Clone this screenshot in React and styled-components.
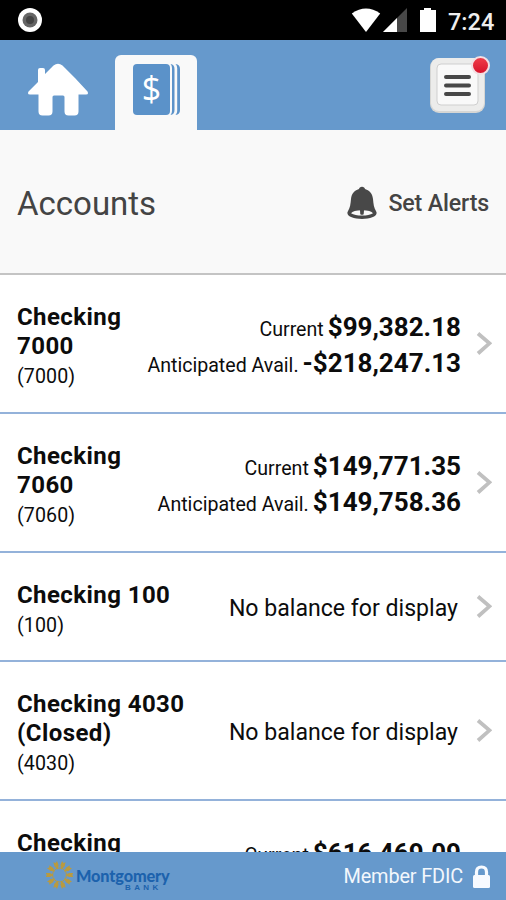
import React from "react";
import styled, { createGlobalStyle } from "styled-components";

const BLUE = "#6699cc";

const Global = createGlobalStyle`
  *, *::before, *::after { box-sizing: border-box; }
  html, body { margin: 0; background: #fff; }
  body { font-family: Roboto, "Liberation Sans", sans-serif; color: #0c0c0c; overflow: hidden; }
  svg { display: block; flex: none; }
`;

const Screen = styled.main`
  width: 506px;
  height: 900px;
  display: flex;
  flex-direction: column;
  overflow: hidden;
`;

const StatusBar = styled.div`
  flex: none;
  height: 40px;
  padding: 0 12px 0 17px;
  display: flex;
  justify-content: space-between;
  align-items: center;
  background: #000;
`;

const StatusIcons = styled.div`
  display: flex;
  align-items: center;
`;

const Clock = styled.span`
  width: 46px;
  margin-left: 11px;
  padding-top: 3px;
  color: #eee;
  font-size: 23.5px;
  font-weight: 500;
  line-height: 28px;
  white-space: nowrap;
`;

const NavBar = styled.nav`
  flex: none;
  height: 90px;
  padding: 15px 20px 0 28px;
  display: flex;
  background: ${BLUE};
`;

const HomeLink = styled.div`
  width: 87px;
  padding-top: 8px;
`;

const Tab = styled.div`
  width: 82px;
  height: 75px;
  padding: 9px 0 0 18px;
  border-radius: 6px 6px 0 0;
  background: #f9f9f9;
`;

const MenuButton = styled.div`
  position: relative;
  width: 56px;
  height: 56px;
  margin: 2px 0 0 auto;
`;

const AlertDot = styled.span`
  position: absolute;
  top: -1px;
  right: -4px;
  width: 19px;
  height: 19px;
  border: 2px solid #f3dfe3;
  border-radius: 50%;
  background: linear-gradient(#ef3b48, #d8142c);
`;

const TitleBar = styled.header`
  flex: none;
  height: 145px;
  padding: 5px 17px 0;
  display: flex;
  align-items: center;
  justify-content: space-between;
  background: #f9f9f9;
  border-bottom: 2px solid #c4c4c4;
  color: #444;
`;

const Heading = styled.h1`
  margin: 0;
  font-size: 33px;
  font-weight: 400;
  line-height: 40px;
`;

const AlertsLink = styled.div`
  display: flex;
  align-items: center;
  gap: 11px;
  padding-bottom: 2px;
  font-size: 23.2px;
  font-weight: 500;
  letter-spacing: -0.15px;
  line-height: 28px;
`;

const List = styled.section`
  flex: 1;
  min-height: 0;
  overflow: hidden;
`;

const Row = styled.article`
  height: ${(p) => p.$height}px;
  padding-left: 17px;
  padding-right: 14px;
  display: flex;
  border-bottom: 2px solid #94b2da;
`;

const Account = styled.div`
  width: ${(p) => p.$width}px;
  flex: none;
  padding-top: 28px;
`;

const AccountName = styled.div`
  font-size: 24px;
  font-weight: 700;
  line-height: 29px;
  letter-spacing: 0.42px;
  white-space: pre-line;
`;

const AccountNumber = styled.div`
  padding-top: 2px;
  font-size: 19.6px;
  line-height: 28px;
  letter-spacing: 0.1px;
`;

const Balances = styled.div`
  flex: 1;
  padding-top: 35px;
  display: flex;
  flex-direction: column;
  align-items: flex-end;
`;

const Balance = styled.div`
  display: flex;
  align-items: baseline;
  gap: 4px;
  height: 36px;
  line-height: 35px;
  white-space: nowrap;
`;

const Label = styled.span`
  font-size: 19.6px;
`;

const Amount = styled.span`
  font-size: 26px;
  font-weight: 700;
`;

const Notice = styled.div`
  flex: 1;
  align-self: center;
  padding: 4px 3px 0 0;
  font-size: 23.1px;
  line-height: 28px;
  text-align: right;
  white-space: nowrap;
`;

const ChevronCell = styled.div`
  width: 31px;
  flex: none;
  padding-bottom: 1px;
  display: flex;
  justify-content: flex-end;
  align-items: center;
`;

const Footer = styled.footer`
  flex: none;
  height: 48px;
  padding: 0 15px 0 46px;
  display: flex;
  justify-content: space-between;
  background: ${BLUE};
`;

const Brand = styled.div`
  display: flex;
  gap: 3px;
  padding-top: 8px;
  color: #1c62ad;
`;

const BrandText = styled.div`
  width: 100px;
  padding-top: 7px;
`;

const BrandName = styled.div`
  font-family: Lato, sans-serif;
  font-size: 16.3px;
  font-weight: 900;
  letter-spacing: -0.15px;
  line-height: 17px;
`;

const BrandSub = styled.div`
  padding-left: 49px;
  font-family: "Liberation Sans", sans-serif;
  font-size: 8px;
  font-weight: 700;
  line-height: 7px;
  letter-spacing: 3.4px;
`;

const Member = styled.div`
  display: flex;
  align-items: center;
  gap: 9px;
  padding-top: 2px;
  color: #f3f7fc;
  font-size: 19.9px;
  letter-spacing: -0.15px;
  line-height: 28px;
`;

const HomeIcon = () => (
  <svg width="60" height="54" viewBox="0 0 60 54" fill="#fff">
    <path d="M10 7q0-2 2-2h3q2 0 2 2v4l8.500-8.500q4.500-3.500 9 0L47 15l12.500 13.500q1.500 3-1.500 3h-7.500v17q0 4-4 4h-6q-4 0-4-4V34q0-1.500-1.500-1.500h-9q-1.500 0-1.500 1.500v14.500q0 4-4 4h-6q-4 0-4-4v-17H2q-3 0-1.500-3L10 19z" />
  </svg>
);

const LedgerIcon = () => (
  <svg width="48" height="52" viewBox="0 0 48 52">
    <rect x="0" y="0" width="37" height="51" rx="4" fill="#5b92c9" />
    <path d="M37.500 0q4 .5 4 5v41q0 4.500-4 5 1.500-1.500 1.500-4V4q0-2.500-1.500-4z" fill="#5b92c9" />
    <path d="M42.500 0q4.500 .5 4.500 5v41q0 4.500-4.500 5 1.700-1.500 1.700-4V4q0-2.500-1.700-4z" fill="#5b92c9" />
    <text x="18.500" y="37" textAnchor="middle" fontFamily="Open Sans, sans-serif" fontSize="34" fill="#fff">$</text>
  </svg>
);

const MenuIcon = () => (
  <svg width="56" height="56" viewBox="0 0 56 56">
    <rect x="0" y="1" width="55" height="55" rx="9" fill="#d6d6d4" />
    <rect x="1" y="1" width="53" height="53" rx="8" fill="#ececeb" />
    <rect x="7" y="7" width="41" height="41" rx="4" fill="#f9f9f9" stroke="#cfcfcf" />
    <g stroke="#484848" strokeWidth="4" strokeLinecap="round">
      <path d="M16 20h23M16 28.500h23M16 37h23" />
    </g>
  </svg>
);

const BellIcon = () => (
  <svg width="30" height="34" viewBox="0 0 30 34">
    <path d="M15 .8c1.800 0 2.600 1 3 2.200 5 1.500 7.500 5 8 10 .5 5 .8 8.500 3.200 12.500C31.500 30 24 33 15 33S-1.500 30 .8 25.500C3.200 21.500 3.500 18 4 13c.5-5 3-8.500 8-10 .4-1.200 1.200-2.200 3-2.200z" fill="#484848" />
    <path d="M4 27.200q2-3 11-3t11 3q-4 2.300-11 2.300T4 27.200z" fill="#f9f9f9" />
    <path d="M13 24h4l-.3 4.200q-1.700 1-3.400 0z" fill="#484848" />
  </svg>
);

const Chevron = () => (
  <svg width="16" height="23" viewBox="0 0 16 23" fill="none">
    <path d="M2 1.500l11.500 9.800L2 21.500" stroke="#c0c0c0" strokeWidth="3.800" />
  </svg>
);

const Sun = () => (
  <svg width="27" height="30" viewBox="-14 -15 28 30">
    {Array.from({ length: 10 }, (_, i) => (
      <path
        key={i}
        transform={`rotate(${i * 36 + 18}) scale(1 1.04)`}
        d="M0-5.800L-2.200-9.500L-2-14L0-12.600L2-14L2.200-9.500z"
        fill="#b99a40"
      />
    ))}
    <circle r="7.200" fill="none" stroke="#b99a40" strokeWidth="1" />
  </svg>
);

const LockIcon = () => (
  <svg width="19" height="24" viewBox="0 0 19 24">
    <path d="M4.500 12V7q0-5 5-5t5 5v5" fill="none" stroke="#f7faff" strokeWidth="3.200" />
    <rect x="1" y="10" width="17" height="13" rx="1.500" fill="#f7faff" />
  </svg>
);

const accounts = [
  { name: "Checking\n7000", number: "7000", height: 139, balances: [["Current", "$99,382.18"], ["Anticipated Avail.", "-$218,247.13"]] },
  { name: "Checking\n7060", number: "7060", height: 139, balances: [["Current", "$149,771.35"], ["Anticipated Avail.", "$149,758.36"]] },
  { name: "Checking 100", number: "100", height: 109 },
  { name: "Checking 4030\n(Closed)", number: "4030", height: 139 },
  { name: "Checking", number: "", height: 139, balances: [["Current", "$616,469.09"]] },
];

export default function App() {
  return (
    <Screen>
      <Global />
      <StatusBar>
        <svg width="26" height="26" viewBox="0 0 26 26">
          <circle cx="13" cy="13" r="12" fill="#fff" />
          <circle cx="13" cy="13" r="7.500" fill="#666" />
          <circle cx="13" cy="13" r="4" fill="#444" />
        </svg>
        <StatusIcons>
          <svg width="86" height="28" viewBox="0 0 86 28">
            <path d="M.8 7.500Q15 -2.500 29.200 7.500L15 26z" fill="#fff" />
            <path d="M32 26L56 2v24z" fill="#484848" />
            <path d="M32 26L46 12v14z" fill="#fff" />
            <path d="M69 4h4V2h7v2h5v22H69z" fill="#fff" />
          </svg>
          <Clock>7:24</Clock>
        </StatusIcons>
      </StatusBar>
      <NavBar>
        <HomeLink><HomeIcon /></HomeLink>
        <Tab><LedgerIcon /></Tab>
        <MenuButton>
          <MenuIcon />
          <AlertDot />
        </MenuButton>
      </NavBar>
      <TitleBar>
        <Heading>Accounts</Heading>
        <AlertsLink><BellIcon />Set Alerts</AlertsLink>
      </TitleBar>
      <List>
        {accounts.map((a, i) => (
          <Row key={i} $height={a.height}>
            <Account $width={a.balances ? 120 : 190}>
              <AccountName>{a.name}</AccountName>
              {a.number && <AccountNumber>({a.number})</AccountNumber>}
            </Account>
            {a.balances ? (
              <Balances>
                {a.balances.map(([label, amount]) => (
                  <Balance key={label}>
                    <Label>{label}</Label>
                    <Amount>{amount}</Amount>
                  </Balance>
                ))}
              </Balances>
            ) : (
              <Notice>No balance for display</Notice>
            )}
            <ChevronCell><Chevron /></ChevronCell>
          </Row>
        ))}
      </List>
      <Footer>
        <Brand>
          <Sun />
          <BrandText>
            <BrandName>Montgomery</BrandName>
            <BrandSub>BANK</BrandSub>
          </BrandText>
        </Brand>
        <Member>Member FDIC<LockIcon /></Member>
      </Footer>
    </Screen>
  );
}
